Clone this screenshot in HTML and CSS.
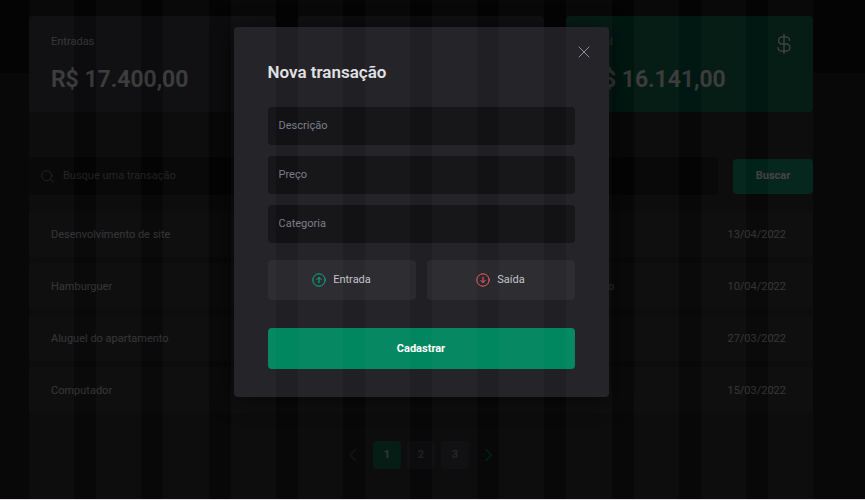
FILE: index.html
```html
<!DOCTYPE html>
<html lang="pt-BR">
<head>
<meta charset="utf-8">
<title>Transações</title>
<link rel="stylesheet" href="styles.css">
</head>
<body>
<div class="page">
  <header class="header"></header>
  <main class="content">
    <section class="summary">
      <article class="card">
        <div class="card-top"><span>Entradas</span></div>
        <strong>R$ 17.400,00</strong>
      </article>
      <article class="card"></article>
      <article class="card card-total">
        <div class="card-top"><span>Total</span>
          <svg class="dollar" viewBox="0 0 14 22"><path d="M7 1.5v19M12.6 7.4A3.6 3.6 0 0 0 9 3.8H5.2a3.6 3.6 0 0 0 0 7.2h4.1a3.6 3.6 0 0 1 0 7.2H4.6A3.6 3.6 0 0 1 1 14.6"/></svg>
        </div>
        <strong>R$ 16.141,00</strong>
      </article>
    </section>

    <form class="search">
      <label class="search-box">
        <svg class="search-icon" viewBox="0 0 14 14"><circle cx="6.2" cy="6.2" r="5.4"/><path d="M10 10l3.2 3.2"/></svg>
        <input type="text" placeholder="Busque uma transação" aria-label="Busque uma transação">
      </label>
      <button type="button">Buscar</button>
    </form>

    <table class="transactions">
      <tbody>
        <tr><td>Desenvolvimento de site</td><td></td><td></td><td class="date">13/04/2022</td></tr>
        <tr><td>Hamburguer</td><td></td><td class="category">Alimentação</td><td class="date">10/04/2022</td></tr>
        <tr><td>Aluguel do apartamento</td><td></td><td></td><td class="date">27/03/2022</td></tr>
        <tr><td>Computador</td><td></td><td></td><td class="date">15/03/2022</td></tr>
      </tbody>
    </table>

    <nav class="pagination">
      <button type="button" class="arrow prev" aria-label="Anterior"><svg viewBox="0 0 16 16"><path d="M10.500 2.500L5 8l5.500 5.500"/></svg></button>
      <button type="button" class="current">1</button>
      <button type="button">2</button>
      <button type="button">3</button>
      <button type="button" class="arrow next" aria-label="Próxima"><svg viewBox="0 0 16 16"><path d="M5 2.500L10.500 8 5 13.500"/></svg></button>
    </nav>
  </main>

  <div class="overlay">
    <div class="modal" role="dialog" aria-labelledby="modal-title">
      <button type="button" class="close" aria-label="Fechar"><svg viewBox="0 0 12 12"><path d="M1 1l10 10M11 1L1 11"/></svg></button>
      <h2 id="modal-title">Nova transação</h2>
      <form>
        <input type="text" placeholder="Descrição" aria-label="Descrição">
        <input type="text" placeholder="Preço" aria-label="Preço">
        <input type="text" placeholder="Categoria" aria-label="Categoria">
        <div class="types">
          <button type="button" class="income"><svg viewBox="0 0 14 14"><circle cx="7" cy="7" r="6.2"/><path d="M7 9.800V4.500M4.800 6.600L7 4.400l2.200 2.200"/></svg>Entrada</button>
          <button type="button" class="outcome"><svg viewBox="0 0 14 14"><circle cx="7" cy="7" r="6.2"/><path d="M7 4.200v5.300M4.800 7.400L7 9.600l2.200-2.200"/></svg>Saída</button>
        </div>
        <button type="button" class="submit">Cadastrar</button>
      </form>
    </div>
  </div>

  <div class="columns" aria-hidden="true">
    <i></i><i></i><i></i><i></i><i></i><i></i><i></i><i></i><i></i><i></i><i></i><i></i>
  </div>
</div>
</body>
</html>
```
FILE: styles.css
```css
* { box-sizing: border-box; margin: 0; padding: 0; }

body {
  background: #e4e0e4;
  color: #c4c4cc;
  font: 11px/18px Roboto, sans-serif;
}

button, input { font: inherit; color: inherit; border: 0; border-radius: 4px; }
svg { fill: none; stroke: currentColor; stroke-linecap: round; stroke-linejoin: round; flex: none; }

.page { position: relative; background: #202024; overflow: hidden; }
.header { height: 73px; background: #121214; }
.content { position: relative; margin-top: -57px; padding: 0 52px 30px 29px; }

.summary { display: grid; grid-template-columns: repeat(3, 1fr); gap: 22px; }
.card { height: 96px; padding: 17px 22px; border-radius: 4px; background: #323238; }
.card-total { background: #015f43; }
.card-top { display: flex; justify-content: space-between; height: 31px; }
.card strong { display: block; font-size: 23px; font-weight: 600; line-height: 32px; color: #e1e1e6; }
.dollar { width: 14px; height: 22px; color: #fff; stroke-width: 1.3; }

.search { display: flex; align-items: center; gap: 15px; margin-top: 45px; }
.search-box { flex: 1; display: flex; align-items: center; gap: 9px; height: 38px; padding: 0 11px 0 12px; border-radius: 4px; background: #121214; color: #7c7c8a; }
.search-icon { width: 13px; height: 13px; }
.search-box input { flex: 1; background: none; }
input::placeholder { color: #7c7c8a; opacity: 1; }
.search button { width: 80px; height: 35px; background: #00875f; color: #fff; font-weight: 700; }

.transactions { width: 100%; margin-top: 10px; border-spacing: 0 6px; table-layout: fixed; }
.transactions td { height: 46px; padding: 2px 22px 0; background: #29292e; }
.transactions td:first-child { width: 42%; border-radius: 4px 0 0 4px; }
.transactions td:last-child { width: 17%; border-radius: 0 4px 4px 0; }
.transactions .category { padding-right: 54px; text-align: center; }
.transactions .date { padding-right: 27px; text-align: right; }

.pagination { display: flex; justify-content: center; gap: 6px; margin-top: 22px; }
.pagination button { width: 28px; height: 28px; background: #323238; color: #7c7c8a; font-weight: 700; }
.pagination .current { background: #015f43; color: #c4c4cc; }
.pagination .arrow { display: flex; align-items: center; justify-content: center; background: none; color: #505059; }
.pagination .next { color: #00875f; }
.arrow svg { width: 16px; height: 16px; stroke-width: 1.5; }

.overlay {
  position: absolute;
  inset: 0;
  display: flex;
  justify-content: center;
  align-items: flex-start;
  padding: 27px 23px 0 0;
  background: rgba(0, 0, 0, .75);
}
.modal { position: relative; width: 375px; padding: 33px 34px 28px; border-radius: 4px; background: #202024; box-shadow: 0 3px 22px rgba(0, 0, 0, .8); }
.modal h2 { font-size: 17px; font-weight: 600; line-height: 24px; color: #e1e1e6; margin-bottom: 23px; }
.close { position: absolute; top: 19px; right: 19px; width: 12px; height: 12px; background: none; color: #8d8d99; }
.close svg { display: block; width: 12px; height: 12px; stroke-width: 1; }
.modal form { display: flex; flex-direction: column; gap: 11px; }
.modal input { width: 100%; height: 38px; padding: 0 11px 1px; background: #121214; }
.types { display: grid; grid-template-columns: 1fr 1fr; gap: 11px; margin-top: 6px; }
.types button { display: flex; align-items: center; justify-content: center; gap: 7px; height: 40px; background: #29292e; }
.types svg { width: 14px; height: 14px; }
.income svg { color: #00b37e; }
.outcome svg { color: #f75a68; }
.submit { height: 41px; margin-top: 17px; background: #00875f; color: #fff; font-weight: 700; }

.columns {
  position: absolute;
  inset: 0;
  display: grid;
  grid-template-columns: repeat(12, 1fr);
  gap: 22px;
  padding: 0 52px 0 29px;
  pointer-events: none;
}
.columns i { background: rgba(255, 255, 255, .022); }
```
